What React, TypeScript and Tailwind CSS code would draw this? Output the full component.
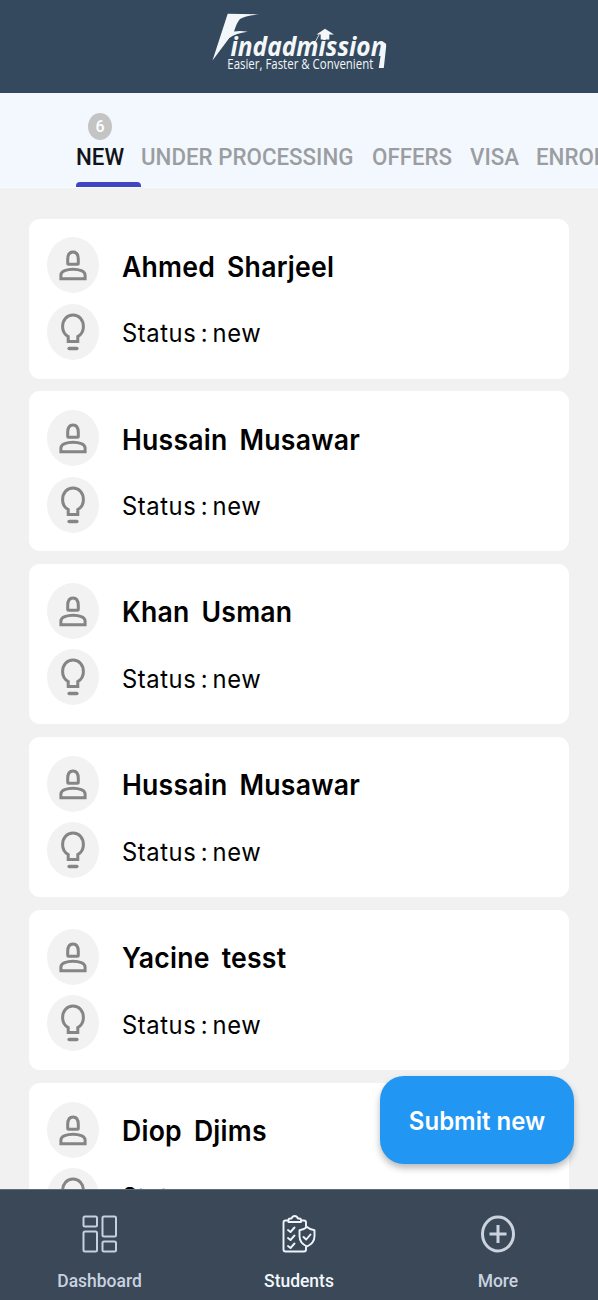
const tabs = [
  { label: 'NEW', width: 'w-[65px]', count: 6 },
  { label: 'UNDER PROCESSING', width: 'w-[230.500px]' },
  { label: 'OFFERS', width: 'w-[98px]' },
  { label: 'VISA', width: 'w-[66.500px]' },
  { label: 'ENROLLED', width: 'w-[130px]' },
]

const students = [
  'Ahmed  Sharjeel',
  'Hussain  Musawar',
  'Khan  Usman',
  'Hussain  Musawar',
  'Yacine  tesst',
  'Diop  Djims',
]

function Logo() {
  return (
    <svg width="180" height="76" viewBox="0 0 180 76" className="ml-[209px] mt-2 overflow-visible" fill="#f4f7f9">
      <path d="M18.700 5.700 L50.500 6.300 Q36 7.500 31 11 Q28 14 25 23.500 Q31 22.500 38.700 23.700 Q27 25 20.300 30 L3.500 52.500 Z" />
      <text
        x="21.500"
        y="47.700"
        textLength="155"
        lengthAdjust="spacingAndGlyphs"
        className="font-['Open_Sans',sans-serif] text-[27px] font-bold italic"
      >
        indadmission
      </text>
      <path d="M173.500 34.500 Q177.500 34 177.200 38 L174.800 60 H169.800 Z" />
      <path d="M116 20.700 L125 26.500 H120.300 V31.500 H111.700 V26.500 H107.500 Z" />
      <path d="M110 27 L104.500 37" stroke="#f4f7f9" strokeWidth="0.800" />
      <text
        x="18.300"
        y="60.500"
        textLength="146"
        lengthAdjust="spacingAndGlyphs"
        className="font-['Open_Sans',sans-serif] text-[14px]"
      >
        Easier, Faster &amp; Convenient
      </text>
    </svg>
  )
}

function PersonIcon() {
  return (
    <svg width="28" height="32" viewBox="0 0 28 32" fill="none" stroke="#858585" strokeWidth="3">
      <path d="M8.700 14.300 V10.500 C8.700 5.500 11 3 14 3 S19.300 5.500 19.300 10.500 V14.300 Q19.300 15.300 18.300 15.300 H9.700 Q8.700 15.300 8.700 14.300 Z" />
      <path d="M1.900 29.700 V26 C1.900 22 8 20.200 14 20.200 S26.100 22 26.100 26 V29.700 Z" />
    </svg>
  )
}

function BulbIcon() {
  return (
    <svg width="26" height="40" viewBox="0 0 26 40" fill="none" stroke="#858585" strokeWidth="3">
      <path d="M8.200 29.500 V24.500 C4.500 22.500 2.600 19 2.600 14.800 C2.600 7.500 7 3 13 3 S23.400 7.500 23.400 14.800 C23.400 19 21.500 22.500 17.800 24.500 V29.500 Z" />
      <path d="M9.200 36.500 H16.800" strokeWidth="3.600" strokeLinecap="round" />
    </svg>
  )
}

function StudentCard({ name }: { name: string }) {
  return (
    <article className="h-40 shrink-0 rounded-[11px] bg-white pl-[18px] pt-[18.600px] font-['Inter',sans-serif] text-black">
      <div className="flex h-14 items-center">
        <div className="flex h-14 w-[52px] items-center justify-center rounded-[50%] bg-[#f2f2f2]">
          <PersonIcon />
        </div>
        <h2 className="ml-[23px] mt-[3px] origin-left scale-x-[0.950] whitespace-pre text-[28px] font-semibold tracking-[0.250px] [word-spacing:-1px]">
          {name}
        </h2>
      </div>
      <div className="mt-[10.500px] flex h-14 items-center">
        <div className="flex h-14 w-[52px] items-center justify-center rounded-[50%] bg-[#f2f2f2]">
          <BulbIcon />
        </div>
        <p className="ml-[23px] mt-1 origin-left scale-x-[0.950] whitespace-pre text-[25px] tracking-[0.620px] [word-spacing:-3px]">
          Status : new
        </p>
      </div>
    </article>
  )
}

function DashboardIcon() {
  return (
    <svg width="36" height="38" viewBox="0 0 36 38" fill="none" stroke="#c5d1e0" strokeWidth="2">
      <rect x="1.500" y="1.500" width="13.500" height="10" rx="1.500" />
      <rect x="1.500" y="16.500" width="13.500" height="20" rx="1.500" />
      <rect x="20.500" y="1.500" width="13.500" height="20" rx="1.500" />
      <rect x="20.500" y="26.500" width="13.500" height="10" rx="1.500" />
    </svg>
  )
}

function StudentsIcon() {
  return (
    <svg
      width="36"
      height="40"
      viewBox="0 0 36 40"
      fill="none"
      stroke="#eff4fa"
      strokeWidth="1.900"
      strokeLinecap="round"
      strokeLinejoin="round"
    >
      <path d="M7 6.500 H4.500 Q2.500 6.500 2.500 8.500 V35.500 Q2.500 37.500 4.500 37.500 H23 Q25 37.500 25 35.500 V33" />
      <path d="M20 6.500 H23 Q25 6.500 25 8.500 V12.500" />
      <path d="M7.500 8 V6 Q7.500 4.500 9.500 4.500 H10.500 Q11.500 2 13.700 2 T17 4.500 H18 Q20 4.500 20 6 V8 Z" />
      <path d="M7 16 L9.500 18 L13.500 13.500 M7 24 L9.500 26 L13.500 21.500 M7 32 L9.500 34 L13.500 29.500" />
      <path d="M26 13 Q22.500 16 18.500 16.200 V22 Q18.500 29 26 32.500 Q33.500 29 33.500 22 V16.200 Q29.500 16 26 13 Z" />
      <path d="M22.500 23 L25.200 25.500 L29.500 20.500" />
    </svg>
  )
}

function MoreIcon() {
  return (
    <svg width="36" height="40" viewBox="0 0 36 40" fill="none" stroke="#cbd3df" strokeWidth="3">
      <ellipse cx="18" cy="20" rx="15.500" ry="17" />
      <path d="M18 11 V29 M9.500 20 H26.500" />
    </svg>
  )
}

const navItems = [
  { label: 'Dashboard', icon: <DashboardIcon />, color: 'text-[#c9d3e0]' },
  { label: 'Students', icon: <StudentsIcon />, color: 'text-[#f2f7fc]' },
  { label: 'More', icon: <MoreIcon />, color: 'text-[#c9d3e0]' },
]

export default function App() {
  return (
    <div className="flex h-[1300px] w-[598px] flex-col overflow-hidden bg-[#f1f1f1] font-['Roboto',sans-serif]">
      <header className="h-[93px] shrink-0 bg-[#34495e]">
        <Logo />
      </header>

      <nav className="flex h-[95px] shrink-0 overflow-hidden border-b border-[#f8fbfc] bg-[#f3f8ff] pl-[76px]">
        {tabs.map((tab, i) => (
          <div key={tab.label} className={`${tab.width} flex shrink-0 flex-col pt-5`}>
            <div className="h-[27px]">
              {tab.count && (
                <span className="ml-3 flex h-[27px] w-6 items-center justify-center rounded-[50%] bg-[#c4c4c4] text-base font-medium text-white">
                  {tab.count}
                </span>
              )}
            </div>
            <span
              className={`${i === 0 ? 'text-[#111418]' : 'text-[#9b9ea1]'} mt-px h-8 origin-left scale-x-[0.930] whitespace-nowrap text-[24px] leading-8 font-medium`}
            >
              {tab.label}
            </span>
            {i === 0 && <div className="mt-[9px] h-[5px] w-[65px] rounded-t-[4px] bg-[#4046bf]" />}
          </div>
        ))}
      </nav>

      <main className="relative min-h-0 flex-1 overflow-hidden">
        <div className="flex flex-col gap-[12.900px] pl-[29px] pr-[29px] pt-[30.600px]">
          {students.map((name, i) => (
            <StudentCard key={i} name={name} />
          ))}
        </div>
        <button className="absolute bottom-[25px] right-6 flex h-[88px] w-[194px] items-center justify-center rounded-[24px] bg-[#2196f3] font-['Inter',sans-serif] text-white shadow-[0_4px_7px_rgba(0,0,0,0.28)]">
          <span className="mt-1 scale-x-[0.960] whitespace-nowrap text-[25px] font-semibold">Submit new</span>
        </button>
      </main>

      <footer className="grid h-[111px] shrink-0 grid-cols-3 border-t border-[#5c6c7d] bg-[#3a4858]">
        {navItems.map((item) => (
          <div key={item.label} className={`${item.color} flex flex-col items-center pt-[24px]`}>
            <div className="flex h-10 items-center">{item.icon}</div>
            <span className="mt-[15px] scale-x-[0.970] text-[18px] leading-6 font-medium">{item.label}</span>
          </div>
        ))}
      </footer>
    </div>
  )
}
